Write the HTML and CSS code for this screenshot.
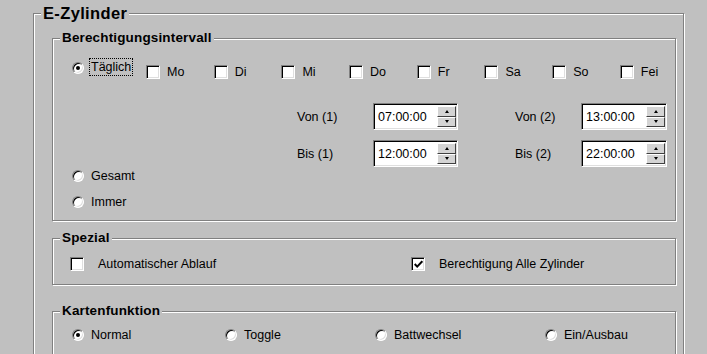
FILE: index.html
```html
<!DOCTYPE html>
<html lang="de">
<head>
<meta charset="utf-8">
<title>E-Zylinder</title>
<link rel="stylesheet" href="styles.css">
</head>
<body>
<fieldset class="group outer">
  <legend class="title-lg">E-Zylinder</legend>
  <div class="outer-body">

    <fieldset class="group inner interval">
      <legend class="title">Berechtigungsintervall</legend>
      <div class="interval-body">
        <div class="days-row">
          <label class="radio-item daily">
            <span class="radio checked"></span>
            <span class="focus-label">Täglich</span>
          </label>
          <div class="days">
            <label class="check-item"><span class="check"></span><span>Mo</span></label>
            <label class="check-item"><span class="check"></span><span>Di</span></label>
            <label class="check-item"><span class="check"></span><span>Mi</span></label>
            <label class="check-item"><span class="check"></span><span>Do</span></label>
            <label class="check-item"><span class="check"></span><span>Fr</span></label>
            <label class="check-item"><span class="check"></span><span>Sa</span></label>
            <label class="check-item"><span class="check"></span><span>So</span></label>
            <label class="check-item"><span class="check"></span><span>Fei</span></label>
          </div>
        </div>

        <div class="times">
          <span class="time-label">Von (1)</span>
          <div class="spin"><span class="spin-value">07:00:00</span><span class="spin-buttons"><span class="spin-btn up"></span><span class="spin-btn down"></span></span></div>
          <span class="time-label">Von (2)</span>
          <div class="spin"><span class="spin-value">13:00:00</span><span class="spin-buttons"><span class="spin-btn up"></span><span class="spin-btn down"></span></span></div>
          <span class="time-label">Bis (1)</span>
          <div class="spin"><span class="spin-value">12:00:00</span><span class="spin-buttons"><span class="spin-btn up"></span><span class="spin-btn down"></span></span></div>
          <span class="time-label">Bis (2)</span>
          <div class="spin"><span class="spin-value">22:00:00</span><span class="spin-buttons"><span class="spin-btn up"></span><span class="spin-btn down"></span></span></div>
        </div>

        <label class="radio-item mode first"><span class="radio"></span><span>Gesamt</span></label>
        <label class="radio-item mode"><span class="radio"></span><span>Immer</span></label>
      </div>
    </fieldset>

    <fieldset class="group inner special">
      <legend class="title">Spezial</legend>
      <div class="special-body">
        <label class="check-item wide"><span class="check"></span><span>Automatischer Ablauf</span></label>
        <label class="check-item wide"><span class="check checked"><svg viewBox="0 0 9 9" width="9" height="9"><path d="M0.7 4 L3.2 6.6 L8.3 1.2" fill="none" stroke="#000" stroke-width="2"/></svg></span><span>Berechtigung Alle Zylinder</span></label>
      </div>
    </fieldset>

    <fieldset class="group inner cards">
      <legend class="title">Kartenfunktion</legend>
      <div class="cards-body">
        <label class="radio-item"><span class="radio checked"></span><span>Normal</span></label>
        <label class="radio-item"><span class="radio"></span><span>Toggle</span></label>
        <label class="radio-item"><span class="radio"></span><span>Battwechsel</span></label>
        <label class="radio-item"><span class="radio"></span><span>Ein/Ausbau</span></label>
      </div>
    </fieldset>

  </div>
</fieldset>
</body>
</html>
```

FILE: styles.css
```css
html, body {
  margin: 0;
  height: 354px;
  overflow: hidden;
}
body {
  background: #c0c0c0;
  color: #000;
  font-family: "Liberation Sans", Arial, sans-serif;
  font-size: 12.5px;
  padding: 3px 0 0 33px;
  box-sizing: border-box;
}

/* etched group box */
.group {
  margin: 0;
  padding: 0;
  min-width: 0;
  border: 1px solid #808080;
  box-shadow: inset 1px 1px 0 #fff, 1px 1px 0 #fff;
  box-sizing: border-box;
}
.group > legend {
  margin-left: 7px;
  padding: 0 2px;
  background: #c0c0c0;
  font-weight: bold;
}
.title-lg {
  font-size: 16.5px;
  line-height: 20px;
  letter-spacing: 0.35px;
}
.title {
  font-size: 13.5px;
  line-height: 16px;
  letter-spacing: 0.15px;
}

.outer {
  width: 651px;
}
.outer-body {
  padding: 7px 0 20px 18px;
}
.inner {
  width: 624px;
}
.inner + .inner {
  margin-top: 9px;
}
.inner.cards {
  margin-top: 18px;
}

/* controls */
.radio-item, .check-item {
  display: flex;
  align-items: center;
}
.radio {
  width: 12px;
  height: 12px;
  box-sizing: border-box;
  border-radius: 50%;
  background: #fff;
  border: 1px solid;
  border-color: #808080 #fff #fff #808080;
  box-shadow: inset 1px 1px 0 #000, inset -1px -1px 0 #dfdfdf;
  position: relative;
  flex: none;
  margin-right: 7px;
}
.radio.checked::after {
  content: "";
  position: absolute;
  left: 3px;
  top: 3px;
  width: 4px;
  height: 4px;
  border-radius: 50%;
  background: #000;
}
.check {
  width: 14px;
  height: 14px;
  box-sizing: border-box;
  background: #fff;
  border: 1px solid;
  border-color: #808080 #fff #fff #808080;
  box-shadow: inset 1px 1px 0 #000, inset -1px -1px 0 #dfdfdf;
  flex: none;
  margin-right: 7px;
  display: flex;
  align-items: center;
  justify-content: center;
}
.check svg {
  display: block;
  margin: 1px 0 0 1px;
}

/* Berechtigungsintervall */
.interval-body {
  padding: 12px 0 10px 19px;
}
.days-row {
  display: flex;
  align-items: flex-start;
  height: 22px;
}
.daily {
  flex: none;
  align-items: flex-start;
  width: 74px;
}
.daily .radio {
  margin-top: 4px;
  margin-right: 5px;
}
.focus-label {
  border: 1px dotted #000;
  padding: 0 1px;
  line-height: 16px;
}
.days {
  flex: none;
  display: grid;
  grid-template-columns: repeat(7, 67.7px) auto;
  margin-top: 7px;
}
.times {
  display: grid;
  grid-template-columns: 76px 142px 66px 86px;
  grid-auto-rows: 27px;
  row-gap: 10px;
  align-items: center;
  margin: 23px 0 0 225px;
}
.spin {
  height: 27px;
  box-sizing: border-box;
  background: #fff;
  border: 1px solid;
  border-color: #808080 #fff #fff #808080;
  box-shadow: inset 1px 1px 0 #000, inset -1px -1px 0 #dfdfdf;
  display: flex;
  align-items: center;
  justify-content: space-between;
  padding: 2px 1px 2px 4px;
}
.times .spin:nth-of-type(odd) {
  width: 85px;
}
.spin-value {
  font-size: 12.5px;
}
.spin-buttons {
  display: flex;
  flex-direction: column;
  width: 19px;
  height: 100%;
}
.spin-btn {
  flex: 1;
  background: #d4d4d4;
  border: 1px solid;
  border-color: #fff #404040 #404040 #fff;
  box-sizing: border-box;
  display: flex;
  align-items: center;
  justify-content: center;
}
.spin-btn::after {
  content: "";
  border-left: 2.5px solid transparent;
  border-right: 2.5px solid transparent;
}
.spin-btn.up::after {
  border-bottom: 3px solid #000;
}
.spin-btn.down::after {
  border-top: 3px solid #000;
}
.mode {
  height: 16px;
}
.mode.first {
  margin-top: 1px;
}
.mode + .mode {
  margin-top: 10px;
}

/* Spezial */
.special-body {
  display: grid;
  grid-template-columns: 341px auto;
  padding: 11px 0 13px 17px;
}
.check-item.wide .check {
  margin-right: 14px;
}

/* Kartenfunktion */
.cards-body {
  display: grid;
  grid-template-columns: 153px 150px 170px auto;
  padding: 9px 0 30px 19px;
}
```
